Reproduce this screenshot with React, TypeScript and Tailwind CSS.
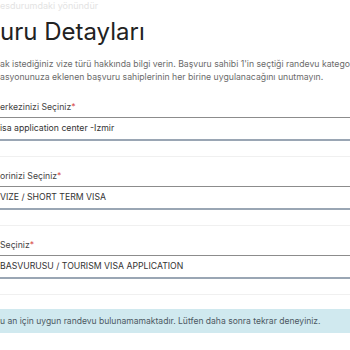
const fields = [
  { label: "erkezinizi Seçiniz", value: "isa application center -Izmir" },
  { label: "orinizi Seçiniz", value: "VIZE / SHORT TERM VISA" },
  { label: "Seçiniz", value: "BASVURUSU / TOURISM VISA APPLICATION" },
];

const App = () => {
  return (
    <div className="w-[350px] h-[350px] overflow-hidden bg-white font-['Inter',sans-serif]">
      <p className="text-[9px] leading-[11px] text-[#e3e3e3] whitespace-nowrap">
        esdurumdaki yönündür
      </p>
      <h1 className="mt-[7px] text-[24px] leading-[28px] text-[#222] whitespace-nowrap">
        uru Detayları
      </h1>
      <div className="mt-[12px] text-[8.7px] leading-[13px] text-[#6b6b6b] whitespace-nowrap overflow-hidden">
        <p>
          ak istediğiniz vize türü hakkında bilgi verin. Başvuru sahibi 1'in seçtiği randevu kategorisinin
        </p>
        <p>asyonunuza eklenen başvuru sahiplerinin her birine uygulanacağını unutmayın.</p>
      </div>
      <div className="mt-[17px]">
        {fields.map((f, i) => (
          <div
            key={i}
            className={`border-b border-[#f0f0f0] pb-[15px] ${i === 0 ? "pt-0" : "pt-[13px]"}`}
          >
            <label className="block text-[8.7px] leading-[12px] text-[#444] whitespace-nowrap">
              {f.label}
              <span className="text-[#d9534f]">*</span>
            </label>
            <div className="mt-[4px] h-[24px] flex items-center border-t border-b-2 border-t-[#8c8c8c] border-b-[#9aa6b4] text-[8.7px] text-[#333] whitespace-nowrap">
              {f.value}
            </div>
          </div>
        ))}
      </div>
      <div className="mt-[14px] h-[24px] flex items-center bg-[#d0e9ef] text-[8.55px] text-[#4c5862] whitespace-nowrap">
        u an için uygun randevu bulunamamaktadır. Lütfen daha sonra tekrar deneyiniz.
      </div>
    </div>
  );
};

export default App;
